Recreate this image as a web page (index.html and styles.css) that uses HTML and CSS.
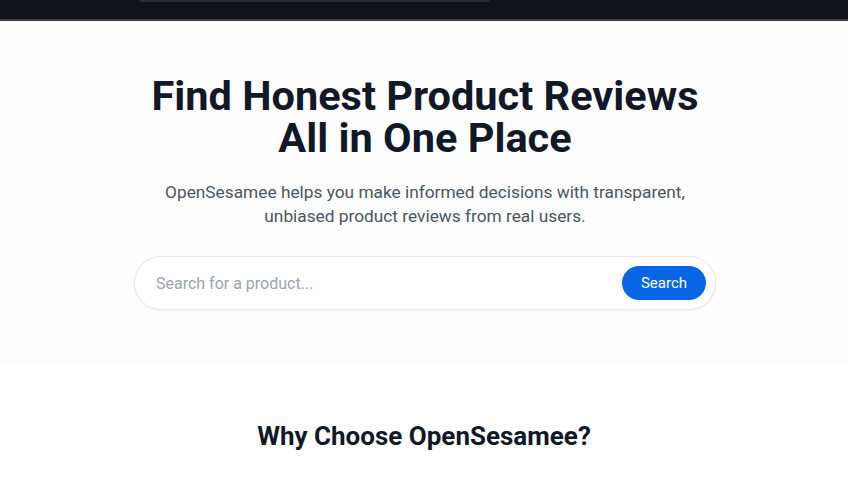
FILE: index.html
```html
<!DOCTYPE html>
<html lang="en">
<head>
<meta charset="utf-8">
<title>OpenSesamee</title>
<link rel="stylesheet" href="styles.css">
</head>
<body>
<header class="topbar">
  <div class="topbar-edge"></div>
</header>
<section class="hero">
  <h1 class="hero-title">Find Honest Product Reviews<br>All in One Place</h1>
  <p class="hero-sub">OpenSesamee helps you make informed decisions with transparent,<br>unbiased product reviews from real users.</p>
  <form class="search" onsubmit="return false">
    <input class="search-input" type="text" placeholder="Search for a product...">
    <button class="search-btn" type="submit">Search</button>
  </form>
</section>
<section class="why">
  <h2 class="why-title">Why Choose OpenSesamee?</h2>
</section>
</body>
</html>
```

FILE: styles.css
```css
* { box-sizing: border-box; }
html, body { margin: 0; padding: 0; }
body {
  font-family: Roboto, "Liberation Sans", Arial, sans-serif;
  background: #ffffff;
  color: #111827;
  overflow: hidden;
}
.topbar {
  height: 21px;
  background: #111318;
  border-bottom: 2px solid #3d4045;
  display: flex;
  align-items: flex-start;
  padding-left: 140px;
}
.topbar-edge {
  width: 350px;
  height: 2px;
  border-radius: 0 0 6px 6px;
  background: #2a2c33;
}
.hero {
  background: #fdfdfd;
  padding: 54px 0 54px 2px;
  display: flex;
  flex-direction: column;
  align-items: center;
  text-align: center;
}
.hero-title {
  margin: 0;
  font-size: 41.5px;
  line-height: 42px;
  font-weight: 700;
  color: #111827;
  letter-spacing: 0;
}
.hero-sub {
  margin: 21px 0 0;
  font-size: 17.3px;
  line-height: 24px;
  color: #4b5563;
}
.search {
  margin-top: 28px;
  width: 582px;
  height: 54px;
  border: 1.5px solid #e5e7eb;
  border-radius: 27px;
  background: #ffffff;
  box-shadow: 0 1px 3px rgba(0,0,0,0.06);
  display: flex;
  align-items: center;
  padding: 0 9px 0 21px;
}
.search-input {
  flex: 1;
  border: 0;
  outline: none;
  background: transparent;
  font-family: inherit;
  font-size: 16px;
  color: #111827;
  padding: 0;
}
.search-input::placeholder { color: #9ca3af; }
.search-btn {
  width: 84px;
  height: 34px;
  border: 0;
  border-radius: 17px;
  background: #0866e4;
  color: #ffffff;
  font-family: inherit;
  font-size: 15px;
  font-weight: 400;
  cursor: pointer;
}
.why {
  background: #ffffff;
  padding-top: 56px;
  text-align: center;
}
.why-title {
  margin: 0;
  font-size: 26px;
  line-height: 32px;
  font-weight: 700;
  color: #111827;
}
```
